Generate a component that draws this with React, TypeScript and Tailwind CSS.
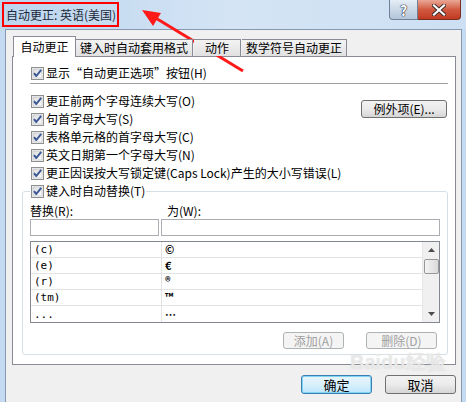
import React from "react";

// Win7 style checkbox, always ticked in this dialog
function Check() {
  return (
    <svg width="13" height="13" viewBox="0 0 13 13" className="shrink-0">
      <defs>
        <linearGradient id="cbg" x1="0" y1="0" x2="1" y2="1">
          <stop offset="0" stopColor="#dcdcdc" />
          <stop offset="1" stopColor="#fdfdfd" />
        </linearGradient>
      </defs>
      <rect x="0.5" y="0.5" width="12" height="12" fill="#f4f4f4" stroke="#8e8f8f" />
      <rect x="2" y="2" width="9" height="9" fill="url(#cbg)" stroke="#b8bcc2" strokeWidth="0.6" />
      <path d="M3 6.2 L5.3 9 L10.2 2.8" fill="none" stroke="#3b5896" strokeWidth="2" strokeLinejoin="round" />
    </svg>
  );
}

function CheckRow({ label }: { label: string }) {
  return (
    <div className="h-[18px] flex items-center gap-[2px] whitespace-nowrap">
      <Check />
      <span>{label}</span>
    </div>
  );
}

const rows = [
  ["(c)", "©"],
  ["(e)", "€"],
  ["(r)", "®"],
  ["(tm)", "™"],
  ["...", "…"],
];

const tabs = [
  { label: "键入时自动套用格式", w: "w-[117px]" },
  { label: "动作", w: "w-[47px] ml-px" },
  { label: "数学符号自动更正", w: "w-[105px] ml-px" },
];

export default function App() {
  return (
    <div className="relative w-[466px] h-[402px] overflow-hidden flex flex-col bg-[#c3daf1] text-[12px] leading-none text-black font-['Noto_Sans_CJK_SC',sans-serif]">
      {/* title bar */}
      <div className="h-[29px] flex items-start bg-gradient-to-r from-[#bcd5ee] via-[#d4e4f5] to-[#cde0f3]">
        <div className="ml-[2px] mt-[2px] h-[25px] border-2 border-[#ff0000] flex items-center pl-[2px] pr-[1px] text-[12px] text-[#1e2a3a] whitespace-nowrap">
          自动更正: 英语(美国)
        </div>
        <div className="ml-auto mr-[5px] flex">
          <div className="w-[29px] h-[20px] flex items-center justify-center border border-t-0 border-[#6f8299] rounded-bl-[4px] bg-gradient-to-b from-[#e6eef7] via-[#cbd8e6] to-[#b4c6da] text-[14px] font-bold text-white [text-shadow:0_0_1px_#223,0_0_1px_#223,0_0_1px_#223]">
            ?
          </div>
          <div className="w-[43px] h-[20px] flex items-center justify-center border border-t-0 border-l-0 border-[#7b2c1f] rounded-br-[4px] bg-gradient-to-b from-[#e9a796] via-[#d15a40] to-[#c03a22]">
            <svg width="14" height="12" viewBox="0 0 14 12">
              <path d="M2 1.5 L12 10.5 M12 1.5 L2 10.5" stroke="#3a2a28" strokeWidth="4" strokeLinecap="square" />
              <path d="M2 1.5 L12 10.5 M12 1.5 L2 10.5" stroke="#ffffff" strokeWidth="2.2" strokeLinecap="square" />
            </svg>
          </div>
        </div>
      </div>

      {/* client area */}
      <div className="flex-1 ml-[5px] mr-[4px] border-l border-t border-r border-[#8799b0] bg-[#f0f0f0] flex flex-col">
        {/* tabs */}
        <div className="relative z-10 -mb-px ml-[7px] mt-[6px] h-[21px] flex items-end">
          <div className="w-[63px] h-[21px] bg-white border border-b-0 border-[#898c95] flex items-center justify-center">
            自动更正
          </div>
          {tabs.map((t) => (
            <div
              key={t.label}
              className={`${t.w} h-[17px] mb-px border border-b-0 border-l-0 border-[#898c95] bg-gradient-to-b from-[#f3f3f3] to-[#e1e1e1] flex items-center justify-center whitespace-nowrap`}
            >
              {t.label}
            </div>
          ))}
        </div>

        {/* tab page */}
        <div className="ml-[6px] w-[444px] h-[309px] border border-[#898c95] bg-white flex flex-col">
          <div className="pl-[18px] pt-[7px]">
            <CheckRow label="显示“自动更正选项”按钮(H)" />
          </div>
          <div className="mt-px ml-[17px] mr-[7px] h-px bg-[#a0a0a0]" />

          <div className="mt-[8px] flex">
            <div className="pl-[18px] flex flex-col">
              <CheckRow label="更正前两个字母连续大写(O)" />
              <CheckRow label="句首字母大写(S)" />
              <CheckRow label="表格单元格的首字母大写(C)" />
              <CheckRow label="英文日期第一个字母大写(N)" />
              <CheckRow label="更正因误按大写锁定键(Caps Lock)产生的大小写错误(L)" />
            </div>
            <button className="ml-auto mr-[8px] mt-[8px] w-[86px] h-[18px] border border-[#707070] rounded-[3px] bg-gradient-to-b from-[#f2f2f2] via-[#ebebeb] to-[#d5d5d5] flex items-center justify-center">
              例外项(E)...
            </button>
          </div>

          <fieldset className="ml-[9px] mr-[7px] border border-[#d5dfe5] rounded-[3px] pl-[7px] pr-[7px] pb-[5px]">
            <legend className="px-px h-[18px] flex items-center gap-[2px]">
              <Check />
              <span>键入时自动替换(T)</span>
            </legend>

            <div className="h-[19px] pt-[2px] grid grid-cols-[129px_1fr] gap-x-[2px] items-center">
              <span>替换(R):</span>
              <span className="pl-[6px]">为(W):</span>
            </div>
            <div className="h-[17px] grid grid-cols-[129px_1fr] gap-x-[2px]">
              <div className="border border-[#abadb3] bg-white" />
              <div className="border border-[#abadb3] bg-white" />
            </div>

            <div className="mt-[5px] h-[82px] border border-[#828790] bg-white flex">
              <div className="flex-1 flex flex-col">
                {rows.map(([a, b], i) => (
                  <div
                    key={a}
                    className={`h-[16px] flex ${i < rows.length - 1 ? "border-b border-[#e3e3e3]" : ""}`}
                  >
                    <div className="w-[131px] border-r border-[#e3e3e3] pl-[3px] flex items-center text-[11px] font-['DejaVu_Sans_Mono',monospace]">
                      {a}
                    </div>
                    <div className="pl-[3px] flex items-center text-[11px] font-bold">{b}</div>
                  </div>
                ))}
              </div>
              <div className="w-[17px] bg-[#f0f0f0] border-l border-[#e6e6e6] flex flex-col items-center">
                <svg width="7" height="4" viewBox="0 0 7 4" className="mt-[6px]">
                  <path d="M0 4 L3.5 0 L7 4 Z" fill="#4d4d4d" />
                </svg>
                <div className="mt-[7px] w-[15px] h-[15px] border border-[#979797] rounded-[2px] bg-gradient-to-r from-[#f4f4f4] to-[#dadada]" />
                <svg width="7" height="4" viewBox="0 0 7 4" className="mt-auto mb-[6px]">
                  <path d="M0 0 L3.5 4 L7 0 Z" fill="#4d4d4d" />
                </svg>
              </div>
            </div>

            <div className="mt-[9px] mr-[3px] flex justify-end gap-[22px]">
              <button className="w-[61px] h-[17px] border border-[#adb2b5] rounded-[3px] bg-[#f4f4f4] text-[#a0a0a0] flex items-center justify-center">
                添加(A)
              </button>
              <button className="w-[71px] h-[17px] border border-[#adb2b5] rounded-[3px] bg-[#f4f4f4] text-[#a0a0a0] flex items-center justify-center">
                删除(D)
              </button>
            </div>
          </fieldset>
        </div>

        {/* dialog buttons */}
        <div className="mt-[10px] mr-[5px] flex justify-end gap-[13px]">
          <button className="w-[71px] h-[19px] border border-[#3c7fb1] rounded-[3px] shadow-[inset_0_0_0_1px_#7fd3f5] bg-gradient-to-b from-[#eaf6fd] via-[#d9f0fc] to-[#bee6fd] text-[13px] flex items-center justify-center">
            确定
          </button>
          <button className="w-[71px] h-[19px] border border-[#707070] rounded-[3px] bg-gradient-to-b from-[#f2f2f2] via-[#ebebeb] to-[#d5d5d5] text-[13px] flex items-center justify-center">
            取消
          </button>
        </div>
      </div>

      {/* annotation arrow */}
      <svg className="absolute inset-0 pointer-events-none" width="466" height="402" viewBox="0 0 466 402">
        <line x1="243" y1="71" x2="154" y2="17" stroke="#ff1a1a" strokeWidth="3" />
        <polygon points="142,10 161,13 153,26" fill="#ff1a1a" />
      </svg>

      {/* faint watermark */}
      <div className="absolute left-[350px] top-[352px] pointer-events-none text-[20px] font-bold leading-none text-white/50 font-['Liberation_Sans',sans-serif] [text-shadow:0_0_1px_#cfcfcf]">
        Baidu经验
      </div>
    </div>
  );
}
